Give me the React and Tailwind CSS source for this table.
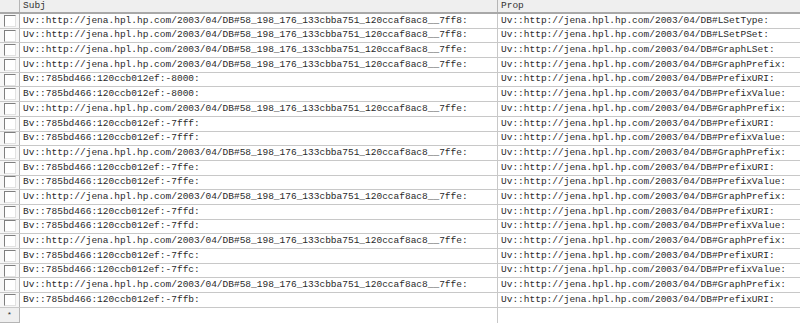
const U = 'Uv::http://jena.hpl.hp.com/2003/04/DB#';
const S = 'Uv::http://jena.hpl.hp.com/2003/04/DB#58_198_176_133cbba751_120ccaf8ac8__';
const B = 'Bv::785bd466:120ccb012ef:-';

const rows = [
  [S + '7ff8:', U + 'LSetType:'],
  [S + '7ff8:', U + 'LSetPSet:'],
  [S + '7ffe:', U + 'GraphLSet:'],
  [S + '7ffe:', U + 'GraphPrefix:'],
  [B + '8000:', U + 'PrefixURI:'],
  [B + '8000:', U + 'PrefixValue:'],
  [S + '7ffe:', U + 'GraphPrefix:'],
  [B + '7fff:', U + 'PrefixURI:'],
  [B + '7fff:', U + 'PrefixValue:'],
  [S + '7ffe:', U + 'GraphPrefix:'],
  [B + '7ffe:', U + 'PrefixURI:'],
  [B + '7ffe:', U + 'PrefixValue:'],
  [S + '7ffe:', U + 'GraphPrefix:'],
  [B + '7ffd:', U + 'PrefixURI:'],
  [B + '7ffd:', U + 'PrefixValue:'],
  [S + '7ffe:', U + 'GraphPrefix:'],
  [B + '7ffc:', U + 'PrefixURI:'],
  [B + '7ffc:', U + 'PrefixValue:'],
  [S + '7ffe:', U + 'GraphPrefix:'],
  [B + '7ffb:', U + 'PrefixURI:'],
];

function Checkbox() {
  return (
    <div className="w-[12px] h-[12px] bg-white border border-t-[#7f7f7f] border-l-[#7f7f7f] border-r-[#e2e2e2] border-b-[#e2e2e2]" />
  );
}

export default function App() {
  return (
    <div
      className="w-[800px] h-[323px] bg-white overflow-hidden text-[9.5px] text-[#2a2a2a]"
      style={{ fontFamily: '"Liberation Mono", "Courier New", monospace' }}
    >
      <div className="flex h-[14px] bg-[#efefef] border-b-2 border-[#a8a8a8]">
        <div className="w-[20px] border-r border-[#b5b5b5]" />
        <div className="w-[478px] pl-[3px] leading-[12px] border-r border-[#b5b5b5] text-[#333]">Subj</div>
        <div className="flex-1 pl-[3px] leading-[12px] text-[#333]">Prop</div>
      </div>
      {rows.map((r, i) => (
        <div key={i} className="flex h-[14.7px] border-b border-[#c8c8c8]">
          <div className="w-[20px] flex items-center justify-center border-r border-[#b5b5b5] bg-[#f7f7f7]">
            <Checkbox />
          </div>
          <div className="w-[478px] pl-[3px] flex items-center border-r border-[#c8c8c8] whitespace-nowrap overflow-hidden">
            {r[0]}
          </div>
          <div className="flex-1 pl-[3px] flex items-center whitespace-nowrap overflow-hidden">{r[1]}</div>
        </div>
      ))}
      <div className="flex h-[15px]">
        <div className="w-[20px] flex items-center justify-center bg-[#efefef] border-r border-b border-[#b5b5b5] text-[8px] leading-none">
          *
        </div>
        <div className="w-[478px] border-r border-[#c8c8c8]" />
        <div className="flex-1" />
      </div>
    </div>
  );
}
